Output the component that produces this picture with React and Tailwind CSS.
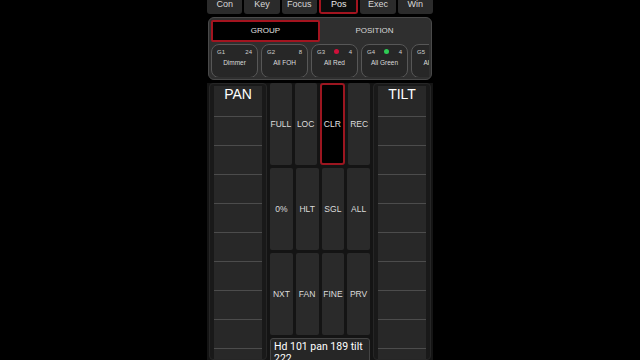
import React from 'react'

const tabs = ['Con', 'Key', 'Focus', 'Pos', 'Exec', 'Win']

const groups = [
  { id: 'G1', count: '24', name: 'Dimmer' },
  { id: 'G2', count: '8', name: 'All FOH' },
  { id: 'G3', count: '4', name: 'All Red', dot: 'bg-[#d0103a]' },
  { id: 'G4', count: '4', name: 'All Green', dot: 'bg-[#2ecc55]' },
  { id: 'G5', count: '4', name: 'All Blue' },
]

const keys = [
  ['FULL', 'LOC', 'CLR', 'REC'],
  ['0%', 'HLT', 'SGL', 'ALL'],
  ['NXT', 'FAN', 'FINE', 'PRV'],
]

function Encoder({ label }) {
  return (
    <div className="w-[58px] h-full bg-[#191919] border border-[#262626] rounded-[4px] px-[4px] pt-[2px] flex">
      <div className="flex-1 bg-[#282828] flex flex-col">
        <div className="h-[31px] shrink-0 flex justify-center pt-[1px] text-[14px] leading-none text-white border-b border-[#4c4c4c]">{label}</div>
        {Array.from({ length: 9 }).map((_, i) => (
          <div key={i} className="h-[29px] shrink-0 border-b border-[#4c4c4c]" />
        ))}
      </div>
    </div>
  )
}

export default function App() {
  return (
    <div className="w-[640px] h-[360px] bg-black flex justify-center overflow-hidden" style={{ fontFamily: '"Liberation Sans", Arial, sans-serif' }}>
      <div className="w-[226px] h-full bg-[#141414] flex flex-col">
        <div className="flex gap-[2px] h-[14px] bg-black">
          {tabs.map(t => (
            <div
              key={t}
              className={t === 'Pos'
                ? 'flex-1 flex justify-center text-[9px] leading-[9px] text-[#e6e6e6] bg-[#0c0c0c] border-x-2 border-b-2 border-[#a3141f] rounded-b-[3px]'
                : 'flex-1 flex justify-center text-[9px] leading-[9px] text-[#d8d8d8] bg-[#2b2b2b] rounded-b-[3px]'}
            >
              {t}
            </div>
          ))}
        </div>

        <div className="bg-black pt-[3px] pb-[3px] px-[1px]">
          <div className="h-[63px] bg-[#2f2f2f] border border-[#4a4a4a] rounded-[6px] p-[2px] flex flex-col gap-[2px]">
            <div className="h-[22px] flex">
              <div className="w-[109px] bg-black border-2 border-[#a3141f] rounded-[2px] flex items-center justify-center text-[8px] text-[#e0e0e0]">GROUP</div>
              <div className="flex-1 flex items-center justify-center text-[8px] text-[#d8d8d8]">POSITION</div>
            </div>
            <div className="flex gap-[3px] overflow-hidden">
              {groups.map(g => (
                <div key={g.id} className="w-[47px] h-[34px] shrink-0 bg-[#272727] border border-[#575757] rounded-[8px] px-[5px] pt-[4px] flex flex-col">
                  <div className="flex items-center justify-between text-[6px] leading-[6px] text-[#d0d0d0]">
                    <span>{g.id}</span>
                    {g.dot ? <span className={`w-[5px] h-[5px] rounded-full ${g.dot}`} /> : null}
                    <span>{g.count}</span>
                  </div>
                  <div className="mt-[4px] text-center text-[6.5px] leading-[7px] text-[#dcdcdc] whitespace-nowrap">{g.name}</div>
                </div>
              ))}
            </div>
          </div>
        </div>

        <div className="flex-1 flex gap-[2px] pl-[2px] pr-[2px] min-h-0">
          <Encoder label="PAN" />
          <div className="w-[102px] flex flex-col gap-[3px] px-[1px]">
            {keys.map((row, ri) => (
              <div key={ri} className="h-[82px] shrink-0 flex gap-[3px]">
                {row.map(k => (
                  <div
                    key={k}
                    className={k === 'CLR'
                      ? 'flex-1 bg-black border-2 border-[#9c1620] rounded-[3px] flex items-center justify-center text-[8.5px] text-[#e0e0e0]'
                      : 'flex-1 bg-[#2a2a2a] rounded-[2px] flex items-center justify-center text-[8.5px] text-[#dcdcdc]'}
                  >
                    {k}
                  </div>
                ))}
              </div>
            ))}
            <div className="h-[40px] shrink-0 bg-[#262626] border border-[#444] rounded-[3px] px-[3px] pt-[2px] text-[10.5px] leading-[12px] text-white" style={{ fontFamily: 'Roboto, "Liberation Sans", sans-serif' }}>
              Hd 101 pan 189 tilt 222
            </div>
          </div>
          <Encoder label="TILT" />
        </div>
      </div>
    </div>
  )
}
